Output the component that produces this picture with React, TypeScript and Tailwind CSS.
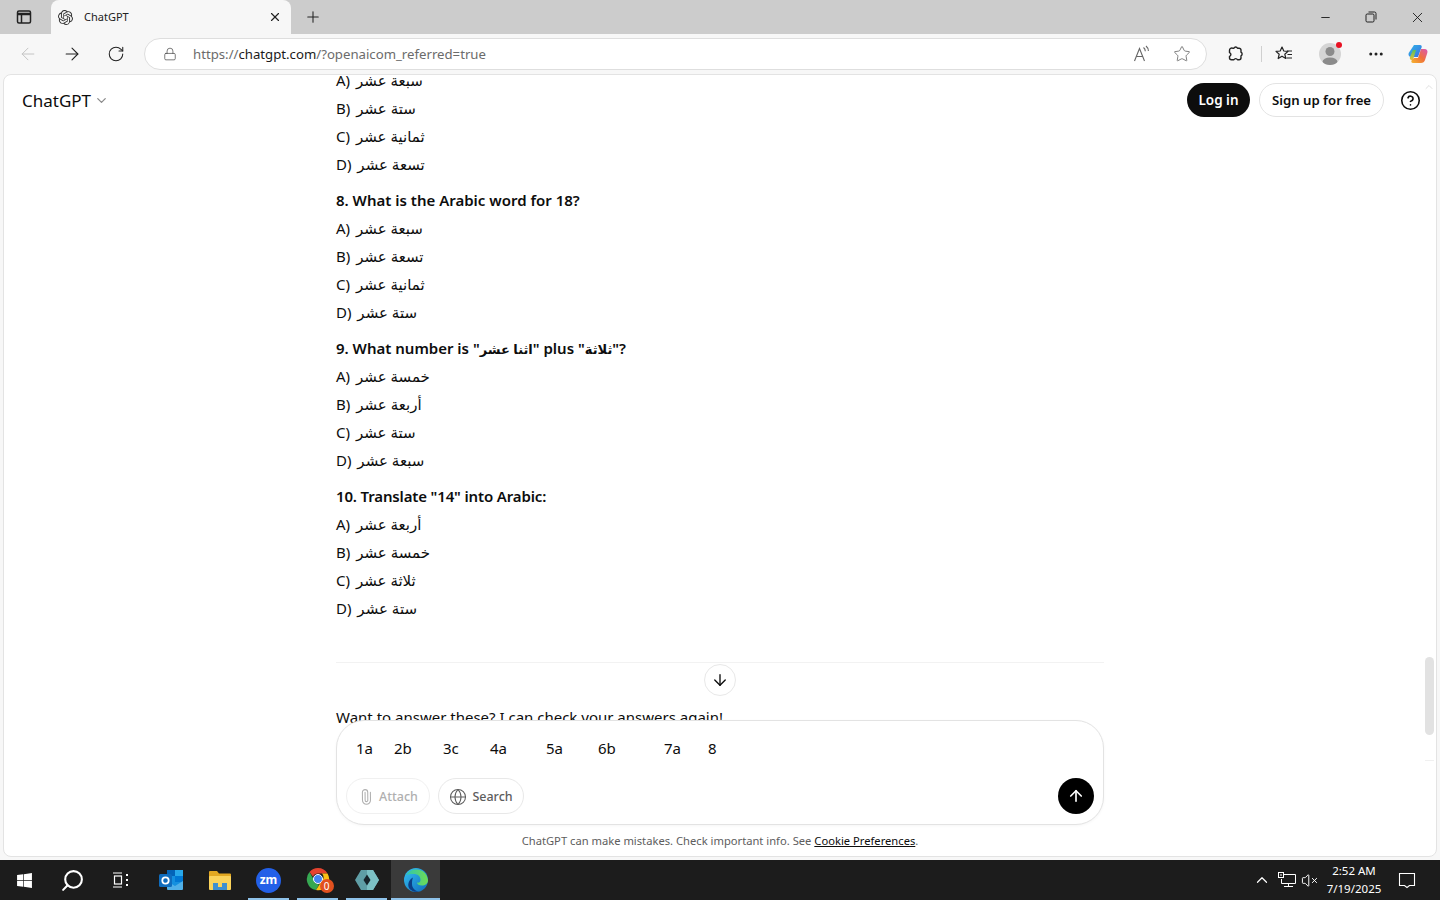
import { ArrowDown, ArrowLeft, ArrowRight, ArrowUp, ChevronDown, ChevronUp, CircleHelp, Ellipsis, Globe, Lock, Minus, Paperclip, Plus, RotateCw, Search, Star, VolumeX, X } from "lucide-react";
import { FaWindows } from "react-icons/fa";
import { SiOpenai } from "react-icons/si";

const font = "font-['Noto_Sans','DejaVu_Sans',sans-serif]";

const questions = [
  { title: null, options: ["سبعة عشر", "ستة عشر", "ثمانية عشر", "تسعة عشر"] },
  { title: <>8. What is the Arabic word for 18?</>, options: ["سبعة عشر", "تسعة عشر", "ثمانية عشر", "ستة عشر"] },
  {
    title: (
      <>
        9. What number is "<span className="text-[13px] leading-none">اثنا عشر</span>" plus "<span className="text-[13px] leading-none">ثلاثة</span>"?
      </>
    ),
    options: ["خمسة عشر", "أربعة عشر", "ستة عشر", "سبعة عشر"],
  },
  { title: <span className="tracking-[-0.15px]">10. Translate "14" into Arabic:</span>, options: ["أربعة عشر", "خمسة عشر", "ثلاثة عشر", "ستة عشر"] },
];

function TabIcon() {
  return (
    <svg width="16" height="16" viewBox="0 0 16 16" fill="none" stroke="#222" strokeWidth="1.5">
      <rect x="1.5" y="2" width="13" height="12" rx="1.5" />
      <path d="M1.5 5h13" strokeWidth="2.5" />
      <path d="M5.5 5v9" />
    </svg>
  );
}

function RestoreIcon() {
  return (
    <svg width="12" height="12" viewBox="0 0 12 12" fill="none" stroke="#222" strokeWidth="1">
      <rect x="1" y="3" width="8" height="8" rx="1.2" />
      <path d="M3.5 1h6a1.5 1.5 0 0 1 1.5 1.5v6" />
    </svg>
  );
}

function PuzzleIcon() {
  return (
    <svg width="18" height="18" viewBox="0 0 18 18" fill="none" stroke="#222" strokeWidth="1.4" strokeLinejoin="round">
      <path d="M6.500 3.200h1.400a2 2 0 0 1 3.600 0h1.500a2 2 0 0 1 2 2v2a2 2 0 0 1 0 3.600v2a2 2 0 0 1-2 2h-1.500a2 2 0 0 0-3.600 0H5.500a2 2 0 0 1-2-2v-1.400a2 2 0 0 0 0-3.800V5.500a2.300 2.300 0 0 1 3-2.300z" />
    </svg>
  );
}

function FavoritesIcon() {
  return (
    <svg width="20" height="20" viewBox="0 0 20 20" fill="none" stroke="#222" strokeWidth="1.2" strokeLinejoin="round">
      <path d="M8 3l1.800 4 4.200.4-3.200 2.800 1 4.300L8 12.200l-3.800 2.300 1-4.300L2 7.400l4.200-.4z" />
      <path d="M13 7h5M13.500 10.500h4.500M12.500 14h5.500" />
    </svg>
  );
}

function ReadAloudIcon() {
  return (
    <svg width="18" height="18" viewBox="0 0 18 18" fill="none" stroke="#666" strokeWidth="1.1">
      <path d="M1.500 16L6.500 3.500 11.500 16M3.300 11.500h6.400" />
      <path d="M10.500 2.500c1.300 1 1.800 2.200 1.800 3.800M13 1c1.700 1.400 2.400 3 2.400 5" />
    </svg>
  );
}

function Avatar() {
  return (
    <div className="relative flex h-[22px] w-[22px] items-center justify-center overflow-hidden rounded-full bg-[#d5d5d5]">
      <svg width="22" height="22" viewBox="0 0 22 22" fill="#8b8b8b">
        <circle cx="11" cy="8.500" r="4.500" />
        <ellipse cx="11" cy="19" rx="7.500" ry="4.500" />
      </svg>
    </div>
  );
}

function CopilotIcon() {
  return (
    <svg width="24" height="24" viewBox="0 0 24 24">
      <defs>
        <linearGradient id="cp1" x1="0" y1="0" x2="1" y2="1">
          <stop offset="0" stopColor="#2fb6e8" />
          <stop offset="1" stopColor="#3c6fe0" />
        </linearGradient>
        <linearGradient id="cp2" x1="0" y1="1" x2="1" y2="0">
          <stop offset="0" stopColor="#f5b52e" />
          <stop offset="0.5" stopColor="#f0703a" />
          <stop offset="1" stopColor="#d957b8" />
        </linearGradient>
        <linearGradient id="cp3" x1="0" y1="0" x2="0" y2="1">
          <stop offset="0" stopColor="#58c05a" />
          <stop offset="1" stopColor="#e8c23a" />
        </linearGradient>
      </defs>
      <path d="M8 3h6c1.500 0 2 1 1.600 2.200L12 15H5.500C3 15 2 13 2.700 11z" fill="url(#cp1)" />
      <path d="M4 15l3-7h3l-3 10H5.500C4 18 3.500 16.500 4 15z" fill="url(#cp3)" />
      <path d="M15 7h3.500C21 7 22 9 21.300 11L19 18c-.6 2-2 3-4 3H7c-1.500 0-2-1.200-1.500-2.500L8 16h4z" fill="url(#cp2)" />
    </svg>
  );
}

function OutlookIcon() {
  return (
    <svg width="26" height="24" viewBox="0 0 26 24">
      <rect x="9" y="2" width="16" height="19" rx="1" fill="#1490df" />
      <rect x="9" y="2" width="8" height="6" fill="#0364b8" />
      <rect x="17" y="2" width="8" height="6" fill="#28a8ea" />
      <rect x="17" y="8" width="8" height="6" fill="#0078d4" />
      <path d="M9 13l8 5 8-5v8a1 1 0 0 1-1 1H10a1 1 0 0 1-1-1z" fill="#50b0e8" />
      <rect x="1" y="6" width="13" height="13" rx="1.500" fill="#0f6cbd" />
      <circle cx="7.500" cy="12.500" r="3.200" fill="none" stroke="#fff" strokeWidth="1.800" />
    </svg>
  );
}

function ExplorerIcon() {
  return (
    <svg width="24" height="22" viewBox="0 0 24 22">
      <path d="M1 3a1 1 0 0 1 1-1h7l2 2.500h11a1 1 0 0 1 1 1V8H1z" fill="#e3a821" />
      <rect x="1" y="7" width="22" height="14" rx="1" fill="#fbd35b" />
      <rect x="5" y="14" width="14" height="7" fill="#3f8fd0" />
      <rect x="10" y="14" width="4" height="4" fill="#fbd35b" />
    </svg>
  );
}

function ChromeIcon() {
  return (
    <div className="relative ml-[2px] h-[26px] w-[26px]">
      <svg width="24" height="24" viewBox="0 0 24 24">
        <path d="M12 1a11 11 0 0 1 9.500 5.500H12a5.500 5.500 0 0 0-5 3.200L3.500 5A11 11 0 0 1 12 1z" fill="#e4432f" />
        <path d="M3.500 5L8 13a5.500 5.500 0 0 0 5 4.400L10 23A11 11 0 0 1 3.500 5z" fill="#36a852" />
        <path d="M21.500 6.500A11 11 0 0 1 10 23l5-8a5.500 5.500 0 0 0 1-8.500z" fill="#fbc116" />
        <circle cx="12" cy="12" r="4.500" fill="#4285f4" stroke="#fff" strokeWidth="1" />
      </svg>
      <span className="absolute -right-[2px] bottom-0 flex h-[14px] w-[14px] items-center justify-center rounded-full bg-[#e2511f] text-[10px] leading-none text-white">0</span>
    </div>
  );
}

function AppIcon() {
  return (
    <svg width="26" height="24" viewBox="0 0 26 24">
      <path d="M7 2h12l6 10-6 10H7L1 12z" fill="#5f9ea6" />
      <path d="M13 2h6l6 10-6 10h-6z" fill="#7cc0c4" />
      <path d="M13 6.500l3.500 5.500-3.500 5.500L9.500 12z" fill="#17232a" />
    </svg>
  );
}

function EdgeIcon() {
  return (
    <svg width="26" height="26" viewBox="0 0 26 26">
      <defs>
        <linearGradient id="eg1" x1="0" y1="0" x2="1" y2="1">
          <stop offset="0" stopColor="#35c1f1" />
          <stop offset="1" stopColor="#0f6cbd" />
        </linearGradient>
        <linearGradient id="eg2" x1="0" y1="0" x2="1" y2="0">
          <stop offset="0" stopColor="#2fc6b0" />
          <stop offset="1" stopColor="#6fdc52" />
        </linearGradient>
      </defs>
      <circle cx="13" cy="13" r="12" fill="url(#eg1)" />
      <path d="M3 8a12 12 0 0 1 22 5c0 4-3 5.500-6 5.500-3 0-5-1-5-3 2 .5 3.500-.5 3.500-2.500 0-4-3-6-6.500-6C7 7 4.500 7.500 3 8z" fill="url(#eg2)" />
      <path d="M9 17c0 4 3 7 7 7.500C14 25 12 25 9.500 24 5 22 4 17 7 13c.8-1 2-2 3-2.500C9 13 9 15 9 17z" fill="#0c3f86" />
    </svg>
  );
}

function NetworkIcon() {
  return (
    <svg width="20" height="18" viewBox="0 0 20 18" fill="none" stroke="#fff" strokeWidth="1">
      <path d="M4.500 3.500H18.500V12.500H4.500V8" />
      <path d="M11.500 12.500v3M7 15.500h9" />
      <rect x="1.500" y="1.500" width="5" height="5" fill="#1c1c1c" />
      <path d="M4 3v2" />
    </svg>
  );
}

function ActionCenterIcon() {
  return (
    <svg width="20" height="20" viewBox="0 0 20 20" fill="none" stroke="#fff" strokeWidth="1.100">
      <path d="M2.500 3.500h15v12h-5l-2.500 2-2.500-2h-5z" />
    </svg>
  );
}

function TaskViewIcon() {
  return (
    <svg width="18" height="18" viewBox="0 0 18 18" fill="none" stroke="#fff" strokeWidth="1.200">
      <path d="M1 2h9M1 16h9" />
      <rect x="2.500" y="5" width="7" height="8" />
      <path d="M14 3h2v2h-2zM14 8h2v2h-2zM14 13h2v2h-2z" fill="#fff" strokeWidth="0" />
    </svg>
  );
}

function Question({ q }: { q: (typeof questions)[number] }) {
  return (
    <div className="mb-2">
      {q.title && <p className="text-[15px] leading-[28px] font-semibold text-[#0d0d0d]">{q.title}</p>}
      {q.options.map((opt, i) => (
        <p key={i} className="text-[15px] leading-[28px] text-[#0d0d0d]">
          {"ABCD"[i]}) <span className="ml-[2px]">{opt}</span>
        </p>
      ))}
    </div>
  );
}

function TaskbarSlot({ children, active, running }: { children: React.ReactNode; active?: boolean; running?: boolean }) {
  return (
    <div className={`relative flex h-10 w-[49px] items-center justify-center ${active ? "bg-[#3a3a3a]" : ""}`}>
      {children}
      {running && <span className="absolute bottom-0 left-1 right-1 h-[2px] bg-[#8fc3ea]" />}
      {active && <span className="absolute bottom-0 left-0 right-0 h-[2px] bg-[#8fc3ea]" />}
    </div>
  );
}

export default function App() {
  return (
    <div className={`flex h-[900px] w-[1440px] flex-col overflow-hidden bg-[#f7f7f7] ${font}`}>
      {/* Tab strip */}
      <div className="flex h-[34px] shrink-0 items-center bg-[#cccccc]">
        <div className="flex w-[51px] justify-center">
          <div className="mr-[3px]">
            <TabIcon />
          </div>
        </div>
        <div className="flex h-[34px] w-[240px] items-center rounded-t-lg bg-[#f7f7f7] pl-[7px] pr-[9px]">
          <SiOpenai size={15} className="text-[#333]" />
          <span className="ml-[11px] flex-1 text-[11px] text-[#222]">ChatGPT</span>
          <X size={14} strokeWidth={2} className="text-[#222]" />
        </div>
        <Plus size={18} strokeWidth={1.4} className="ml-[13px] text-[#222]" />
        <div className="ml-auto flex items-center">
          <div className="flex w-[46px] justify-center">
            <Minus size={13} strokeWidth={1.6} className="text-[#111]" />
          </div>
          <div className="flex w-[46px] justify-center">
            <RestoreIcon />
          </div>
          <div className="flex w-[46px] justify-center">
            <X size={17} strokeWidth={1.2} className="text-[#111]" />
          </div>
        </div>
      </div>

      {/* Toolbar */}
      <div className="flex h-[40px] shrink-0 items-center">
        <div className="flex w-[144px] items-center">
          <ArrowLeft size={20} strokeWidth={1.2} className="ml-[18px] text-[#c4c4c4]" />
          <ArrowRight size={20} strokeWidth={1.3} className="ml-[24px] text-[#222]" />
          <RotateCw size={18} strokeWidth={1.4} className="ml-[25px] text-[#222]" />
        </div>
        <div className="flex h-[32px] w-[1063px] items-center rounded-full border border-[#dedede] bg-white pl-[18px] pr-[15px]">
          <Lock size={14} strokeWidth={1.2} className="text-[#444]" />
          <span className="ml-[16px] flex-1 pt-px text-[13.200px] text-[#6b6b6b]">
            https://<span className="text-[#1a1a1a]">chatgpt.com</span>/?openaicom_referred=true
          </span>
          <ReadAloudIcon />
          <Star size={18} strokeWidth={1.1} className="ml-[22px] text-[#666]" />
        </div>
        <div className="ml-[19px] flex items-center">
          <PuzzleIcon />
          <div className="ml-[17px] h-[16px] w-px bg-[#d0d0d0]" />
          <div className="ml-[12px]">
            <FavoritesIcon />
          </div>
          <div className="relative ml-[25px]">
            <Avatar />
            <span className="absolute -right-[1px] -top-[1px] h-[6px] w-[6px] rounded-full bg-[#e81123]" />
          </div>
          <Ellipsis size={18} strokeWidth={2} className="ml-[26px] text-[#222]" />
          <div className="ml-[21px]">
            <CopilotIcon />
          </div>
        </div>
      </div>

      {/* Page */}
      <div className="relative flex-1 overflow-hidden">
        <div className="absolute inset-x-[3px] bottom-[3px] top-0 overflow-hidden rounded-lg border border-[#e3e3e3] bg-white">
          <div className="-mt-[9px] ml-[332px] w-[768px]">
            {questions.map((q, i) => (
              <Question key={i} q={q} />
            ))}
            <hr className="mt-[40px] border-t border-[#f2f2f2]" />
            <p className="mt-[40px] text-[15px] leading-[28px] text-[#0d0d0d]">Want to answer these? I can check your answers again!</p>
          </div>

          {/* Header */}
          <div className="absolute left-[18px] top-[11px] flex items-center text-[#0d0d0d]">
            <span className="pt-px text-[17px] leading-[28px]">ChatGPT</span>
            <ChevronDown size={15} className="ml-[3px] text-[#8a8a8a]" />
          </div>
          <div className="absolute right-[12px] top-[8px] flex items-center">
            <button className="h-[34px] w-[63px] rounded-full bg-[#0d0d0d] pt-px text-[13.500px] font-semibold text-white">Log in</button>
            <button className="ml-[9px] h-[34px] w-[125px] rounded-full border border-[#e3e3e3] bg-white pt-px text-[13.200px] font-semibold text-[#0d0d0d]">Sign up for free</button>
            <CircleHelp size={21} strokeWidth={1.8} className="ml-[16px] mr-[3px] text-[#0d0d0d]" />
          </div>

          {/* Scroll to bottom */}
          <div className="absolute left-[700px] top-[589px] flex h-8 w-8 items-center justify-center rounded-full border border-[#e8e8e8] bg-white">
            <ArrowDown size={18} strokeWidth={1.8} className="text-[#0d0d0d]" />
          </div>

          {/* Composer */}
          <div className="absolute left-[332px] top-[645px] h-[105px] w-[768px] rounded-[28px] border border-[#e3e3e3] bg-white shadow-[0_1px_3px_rgba(0,0,0,0.04)]">
            <p className="ml-[19px] mt-[13px] flex text-[15px] leading-[28px] text-[#0d0d0d]">
              <span className="w-[38px]">1a</span>
              <span className="w-[49px]">2b</span>
              <span className="w-[47px]">3c</span>
              <span className="w-[56px]">4a</span>
              <span className="w-[52px]">5a</span>
              <span className="w-[66px]">6b</span>
              <span className="w-[44px]">7a</span>
              <span>8</span>
            </p>
            <div className="ml-[9px] mt-[16px] flex items-center">
              <div className="flex h-[36px] w-[84px] items-center justify-center rounded-full border border-[#f0f0f0] pt-[2px] text-[12.500px] font-medium text-[#b0b0b0]">
                <Paperclip size={16} strokeWidth={1.6} className="mr-[5px] -rotate-45" />
                Attach
              </div>
              <div className="ml-[8px] flex h-[36px] w-[86px] items-center justify-center rounded-full border border-[#e8e8e8] pt-[2px] text-[12.500px] font-medium text-[#5d5d5d]">
                <Globe size={18} strokeWidth={1.4} className="mr-[5px]" />
                Search
              </div>
              <div className="ml-auto mr-[9px] flex h-9 w-9 items-center justify-center rounded-full bg-black">
                <ArrowUp size={18} strokeWidth={2.2} className="text-white" />
              </div>
            </div>
          </div>
          <p className="absolute bottom-[7px] left-0 right-0 text-center text-[11.200px] leading-[16px] text-[#5d5d5d]">
            ChatGPT can make mistakes. Check important info. See <span className="text-[#0d0d0d] underline">Cookie Preferences</span>.
          </p>

          {/* Scrollbar */}
          <ChevronUp size={12} className="absolute right-[1px] top-[6px] text-[#e0e0e0]" />
          <div className="absolute right-[2px] top-[582px] h-[78px] w-[9px] rounded-full bg-[#e2e2e2]" />
          <div className="absolute right-[2px] top-[685px] h-px w-[9px] bg-[#f0f0f0]" />
        </div>
      </div>

      {/* Taskbar */}
      <div className="flex h-10 shrink-0 items-center bg-[#1c1c1c] text-white">
        <div className="flex h-10 w-12 items-center justify-center">
          <FaWindows size={17} />
        </div>
        <div className="flex h-10 w-12 items-center justify-center">
          <Search size={25} strokeWidth={2} className="-scale-x-100" />
        </div>
        <div className="flex h-10 w-[50px] items-center justify-center">
          <TaskViewIcon />
        </div>
        <TaskbarSlot>
          <OutlookIcon />
        </TaskbarSlot>
        <TaskbarSlot>
          <ExplorerIcon />
        </TaskbarSlot>
        <TaskbarSlot running>
          <div className="flex h-[25px] w-[25px] items-center justify-center rounded-full bg-[#2360e8] text-[12px] font-bold leading-none text-white">zm</div>
        </TaskbarSlot>
        <TaskbarSlot running>
          <ChromeIcon />
        </TaskbarSlot>
        <TaskbarSlot running>
          <AppIcon />
        </TaskbarSlot>
        <TaskbarSlot active>
          <EdgeIcon />
        </TaskbarSlot>

        <div className="ml-auto flex items-center">
          <ChevronUp size={18} strokeWidth={1.6} />
          <div className="ml-[6px]">
            <NetworkIcon />
          </div>
          <VolumeX size={17} strokeWidth={1.4} className="ml-[4px]" />
          <div className="flex w-[72px] flex-col items-center text-[11.500px] leading-[18px]">
            <span>2:52 AM</span>
            <span>7/19/2025</span>
          </div>
          <div className="ml-[7px] mr-[23px]">
            <ActionCenterIcon />
          </div>
        </div>
      </div>
    </div>
  );
}
